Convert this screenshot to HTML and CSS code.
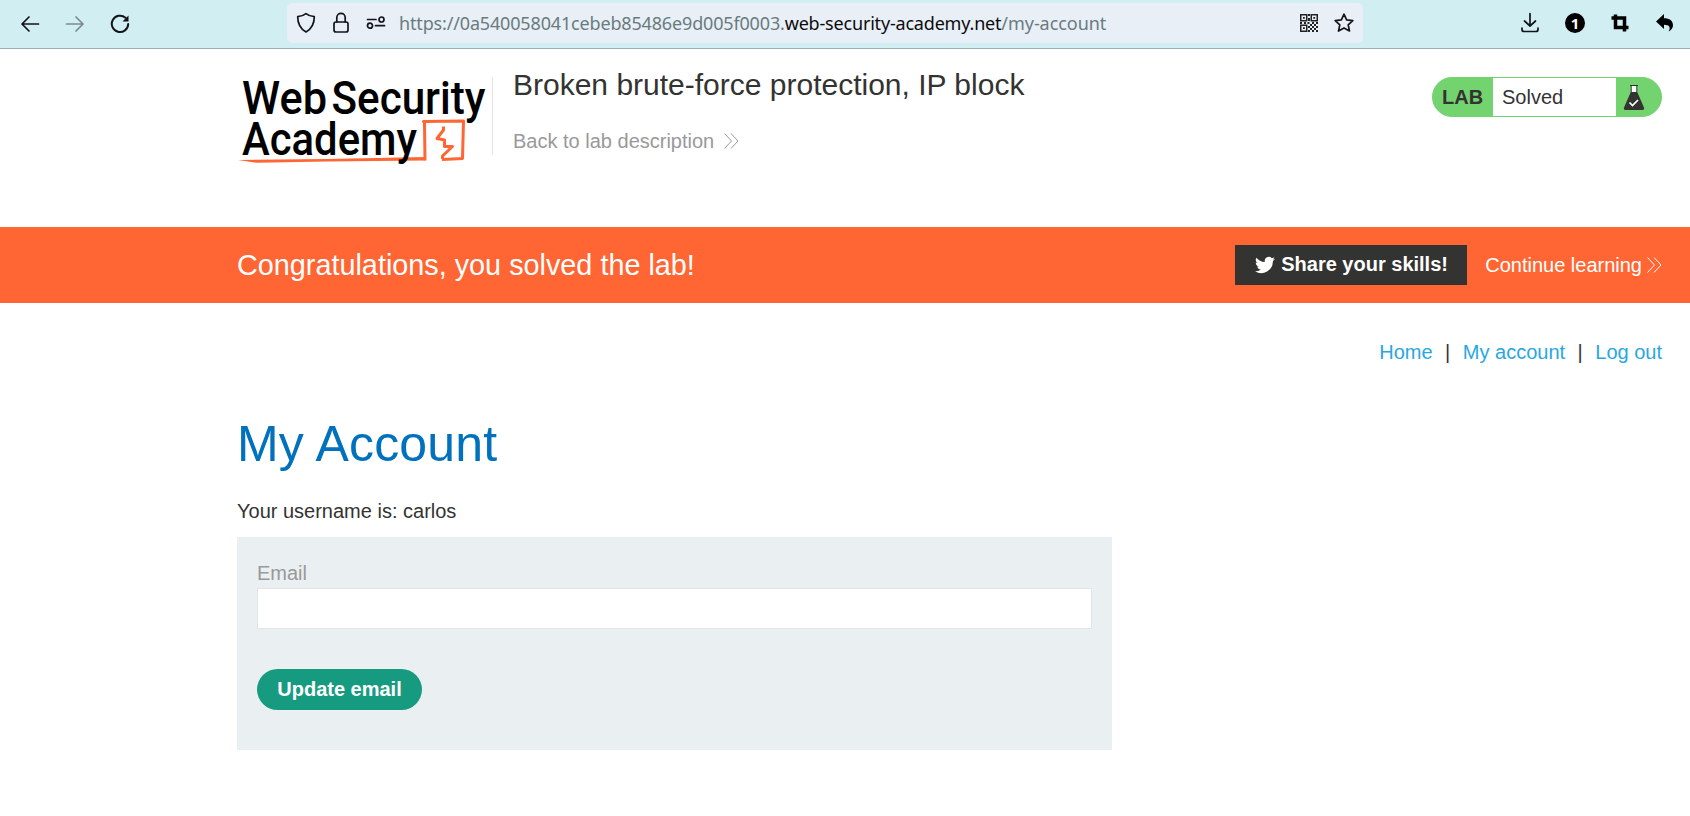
FILE: index.html
```html
<!DOCTYPE html>
<html lang="en">
<head>
<meta charset="utf-8">
<title>Broken brute-force protection, IP block</title>
<link rel="stylesheet" href="styles.css">
</head>
<body>
<div class="toolbar">
  <div class="nav-buttons">
    <svg width="20" height="20" viewBox="0 0 20 20" class="line"><path d="M18.500 10H2M9 3L2 10l7 7"/></svg>
    <svg width="20" height="20" viewBox="0 0 20 20" class="line faded"><path d="M1.500 10H18M11 3l7 7-7 7"/></svg>
    <svg width="20" height="20" viewBox="0 0 20 20" class="line reload"><path d="M15.500 3.800A8.200 8.200 0 1 0 18.200 10"/><path d="M18.500 1.500v6h-6z" fill="#111" stroke="none"/></svg>
  </div>
  <div class="address">
    <svg width="20" height="22" viewBox="0 0 20 22" class="line"><path d="M10 1.700C7.500 3.700 4.500 4.500 1.700 4.700c0 7 2.500 12 8.300 15.300 5.800-3.300 8.300-8.300 8.300-15.300C15.500 4.500 12.500 3.700 10 1.700z"/></svg>
    <svg width="18" height="22" viewBox="0 0 18 22" class="line"><rect x="2" y="10" width="14" height="10" rx="2"/><path d="M4.800 10V5.500a4.200 4.200 0 0 1 8.400 0V10"/></svg>
    <svg width="20" height="20" viewBox="0 0 20 20" class="line"><path d="M1.500 6.500H10M9.500 12.700H18.500"/><circle cx="15.500" cy="6.500" r="2.500"/><circle cx="4" cy="12.700" r="2.500"/></svg>
    <div class="url"><span class="u1">https://0a540058041cebeb85486e9d005f0003.</span><span class="u2">web-security-academy.net</span><span class="u3">/my-account</span></div>
    <svg width="18" height="18" viewBox="0 0 18 18" class="qr"><g fill="none" stroke="#222" stroke-width="1.500"><rect x=".75" y=".75" width="6" height="6"/><rect x="11.250" y=".75" width="6" height="6"/><rect x=".75" y="11.250" width="6" height="6"/></g><path fill="#222" d="M3 3h1.800v1.800H3zM13.300 3h1.800v1.800h-1.800zM3 13.300h1.800v1.800H3zM8 0h2v2H8zM8 4h2v3H8zM0 8h2v2H0zM4 8h2v2H4zM7.500 8h2v2h-2zM12 8h2v2h-2zM16 8h2v2h-2zM10 10h2v2h-2zM14 10h2v2h-2zM8 12h2v2H8zM12 12h2v2h-2zM16 12h2v2h-2zM10 14h2v2h-2zM14 14h2v2h-2zM8 16h2v2H8zM12 16h2v2h-2zM16 16h2v2h-2z"/></svg>
    <svg width="20" height="20" viewBox="0 0 20 20" class="line"><path d="M10 1.200l2.600 5.700 6.200.700-4.600 4.200 1.300 6.200L10 14.900 4.500 18l1.300-6.200L1.200 7.600l6.200-.700z"/></svg>
  </div>
  <div class="tools">
    <svg width="20" height="22" viewBox="0 0 20 22" class="line"><path d="M10 1.500v12.500M4.500 9l5.500 5 5.500-5M2 16v1.500a2 2 0 0 0 2 2h12a2 2 0 0 0 2-2v-1.500"/></svg>
    <span class="count">1</span>
    <svg width="20" height="20" viewBox="0 0 20 20" class="crop"><path d="M1.500 5H14.500v13.500M5.500 1.500V14.500H18.500"/></svg>
    <svg width="20" height="20" viewBox="0 0 20 20"><path d="M9 1v4.300c5.500 0 9 2.600 9 7 0 2.600-1.500 4.800-4.500 6.200 2.500-4 1-6.800-4.500-6.800V16L1 8.500z"/></svg>
  </div>
</div>

<header class="lab-header">
  <svg class="logo" width="255" height="96" viewBox="0 0 255 96">
    <text x="5" y="44.500" textLength="85" lengthAdjust="spacingAndGlyphs">Web</text>
    <text x="94.500" y="44.500" textLength="154" lengthAdjust="spacingAndGlyphs">Security</text>
    <g fill="none" stroke="#f63" stroke-width="3" stroke-linejoin="round"><path d="M188 91.500L187.500 54l-1-1.500 40 -.5L225.500 89.500 205 90.500"/><path d="M206.500 57.500v3.500l-6.500 8.500 7.500 1.500v6.500h8L205.500 87v3"/></g>
    <path fill="#f63" d="M1 91L90 90l98-2v3.500L90 92.500 20 93.800z"/>
    <text x="5" y="85.500" textLength="175" lengthAdjust="spacingAndGlyphs">Academy</text>
  </svg>
  <div class="lab-title">
    <h2>Broken brute-force protection, IP block</h2>
    <a class="back">Back to lab description<svg width="15" height="18" viewBox="0 0 15 18" class="chev"><path d="M.5 1.500L7.500 9l-7 7.500M7 1.500L14 9l-7 7.500"/></svg></a>
  </div>
  <div class="lab-status"><b>LAB</b><span>Solved</span>
    <svg width="22" height="28" viewBox="0 0 22 28"><path d="M8 3h6v7H8z" fill="#fff"/><path d="M7 2.500h8M8.200 3v6M13.800 3v6" stroke="#333332" fill="none"/><path d="M7.800 9h6.400L21 24.500q.5 2.500-1.500 2.500h-17Q.5 27 1 24.500z" fill="#333332"/><path d="M6.500 19.500l3 3 5.500-5.500" stroke="#fff" stroke-width="1.700" fill="none"/></svg>
  </div>
</header>

<section class="banner">
  <p>Congratulations, you solved the lab!</p>
  <a class="share"><svg width="20" height="18" viewBox="0 1.500 24 21"><path fill="#fff" d="M24 4.600a10 10 0 0 1-2.800.8 4.900 4.900 0 0 0 2.100-2.700 10 10 0 0 1-3.100 1.200 4.900 4.900 0 0 0-8.400 4.500A14 14 0 0 1 1.700 3.200a4.900 4.900 0 0 0 1.500 6.500 4.900 4.900 0 0 1-2.200-.6 4.900 4.900 0 0 0 3.900 4.900 5 5 0 0 1-2.200.1 4.900 4.900 0 0 0 4.600 3.400A9.900 9.900 0 0 1 0 19.500a14 14 0 0 0 21.500-12.400A10 10 0 0 0 24 4.600z"/></svg><span>Share your skills!</span></a>
  <a class="continue">Continue learning<svg width="15" height="18" viewBox="0 0 15 18" class="chev"><path d="M.5 1.500L7.500 9l-7 7.500M7 1.500L14 9l-7 7.500"/></svg></a>
</section>

<main>
  <nav><a>Home</a><i>|</i><a>My account</a><i>|</i><a>Log out</a></nav>
  <h1>My Account</h1>
  <p class="username">Your username is: carlos</p>
  <form>
    <label for="email">Email</label>
    <input id="email" type="email">
    <button type="button">Update email</button>
  </form>
</main>
</body>
</html>
```
FILE: styles.css
```css
* { box-sizing: border-box; }
body {
  margin: 0;
  background: #fff;
  color: #333332;
  font: 20px/24px "Liberation Sans", Arial, sans-serif;
}
svg { display: block; flex: none; }
h1, h2, p { margin: 0; font-weight: 400; }

.toolbar {
  display: flex;
  height: 49px;
  padding: 3px 15px 0 20px;
  background: #d1eff3;
  border-bottom: 1px solid #9aafb3;
}
.line { fill: none; stroke: #15141a; stroke-width: 1.7; stroke-linecap: round; stroke-linejoin: round; }
.faded { opacity: .45; }
.nav-buttons { display: flex; gap: 25px; width: 267px; padding-top: 11px; }
.reload { stroke-width: 2; }
.address {
  display: flex;
  align-items: center;
  width: 1076px;
  height: 40px;
  padding: 0 9px;
  gap: 16px;
  border-radius: 5px;
  background: #e8eff6;
}
.url {
  flex: 1;
  margin-left: -3px;
  color: #6a7b7e;
  font: 18px/24px "Noto Sans", "Open Sans", sans-serif;
  white-space: nowrap;
}
.u1 { letter-spacing: -.16px; }
.u2 { color: #0c0c0d; letter-spacing: -.19px; }
.u3 { letter-spacing: -.06px; }
.tools { display: flex; align-items: center; gap: 25px; height: 40px; margin-left: auto; }
.count {
  width: 20px;
  height: 20px;
  border-radius: 50%;
  background: #000;
  color: #fff;
  font: 700 15px/20px "Noto Sans", sans-serif;
  text-align: center;
}
.crop { fill: none; stroke: #000; stroke-width: 3.5; }

.lab-header {
  display: flex;
  align-items: flex-start;
  height: 178px;
  padding: 20px 28px 0 237px;
}
.logo { overflow: visible; font: 500 47px Roboto, sans-serif; fill: #000; }
.lab-title { height: 78px; margin-top: 8px; padding-left: 20px; border-left: 1px solid #e4e4e4; }
h2 { margin-top: -9px; font-size: 30px; line-height: 34px; white-space: nowrap; }
.back { display: flex; align-items: center; gap: 10px; margin-top: 27px; color: #999; }
.chev { fill: none; stroke: currentColor; stroke-width: 1; }
.lab-status {
  display: flex;
  width: 230px;
  height: 40px;
  margin: 8px 0 0 auto;
  border: 1px solid #72d36f;
  border-radius: 20px;
  background: #72d36f;
  overflow: hidden;
  line-height: 38px;
}
.lab-status b { width: 60px; padding-left: 9px; }
.lab-status span { width: 123px; padding-left: 9px; background: #fff; }
.lab-status svg { margin: 5px 0 0 7px; }

.banner {
  display: flex;
  align-items: center;
  height: 76px;
  padding: 0 28px 0 237px;
  background: #f63;
  color: #fff;
}
.banner p { margin-right: auto; font-size: 28.8px; line-height: 32px; }
.share {
  display: flex;
  align-items: center;
  gap: 6px;
  width: 232px;
  height: 40px;
  padding-left: 20px;
  background: #333332;
  font-weight: 700;
  white-space: nowrap;
}
.share span { margin-top: -2px; }
.continue { display: flex; align-items: center; gap: 5px; margin-left: 18px; }

main { padding: 37px 28px 0 237px; }
nav { display: flex; justify-content: flex-end; color: #29a7e1; }
nav i { margin: 0 12.5px; color: #333332; font-style: normal; }
h1 { margin-top: 50px; color: #0071bd; font-size: 50px; line-height: 60px; letter-spacing: .2px; }
.username { margin-top: 25px; }
form {
  display: flex;
  flex-direction: column;
  align-items: flex-start;
  width: 875px;
  height: 213px;
  margin-top: 14px;
  padding: 24px 20px 0;
  background: #eaeff2;
}
label { color: #999; }
input {
  width: 100%;
  height: 41px;
  margin: 3px 0 40px;
  border: 1px solid #e4e4e4;
  background: #fff;
}
button {
  width: 165px;
  height: 41px;
  padding: 0 0 2px;
  border: 0;
  border-radius: 21px;
  background: #179b80;
  color: #fff;
  font: 700 20px/38px "Liberation Sans", Arial, sans-serif;
}
```
